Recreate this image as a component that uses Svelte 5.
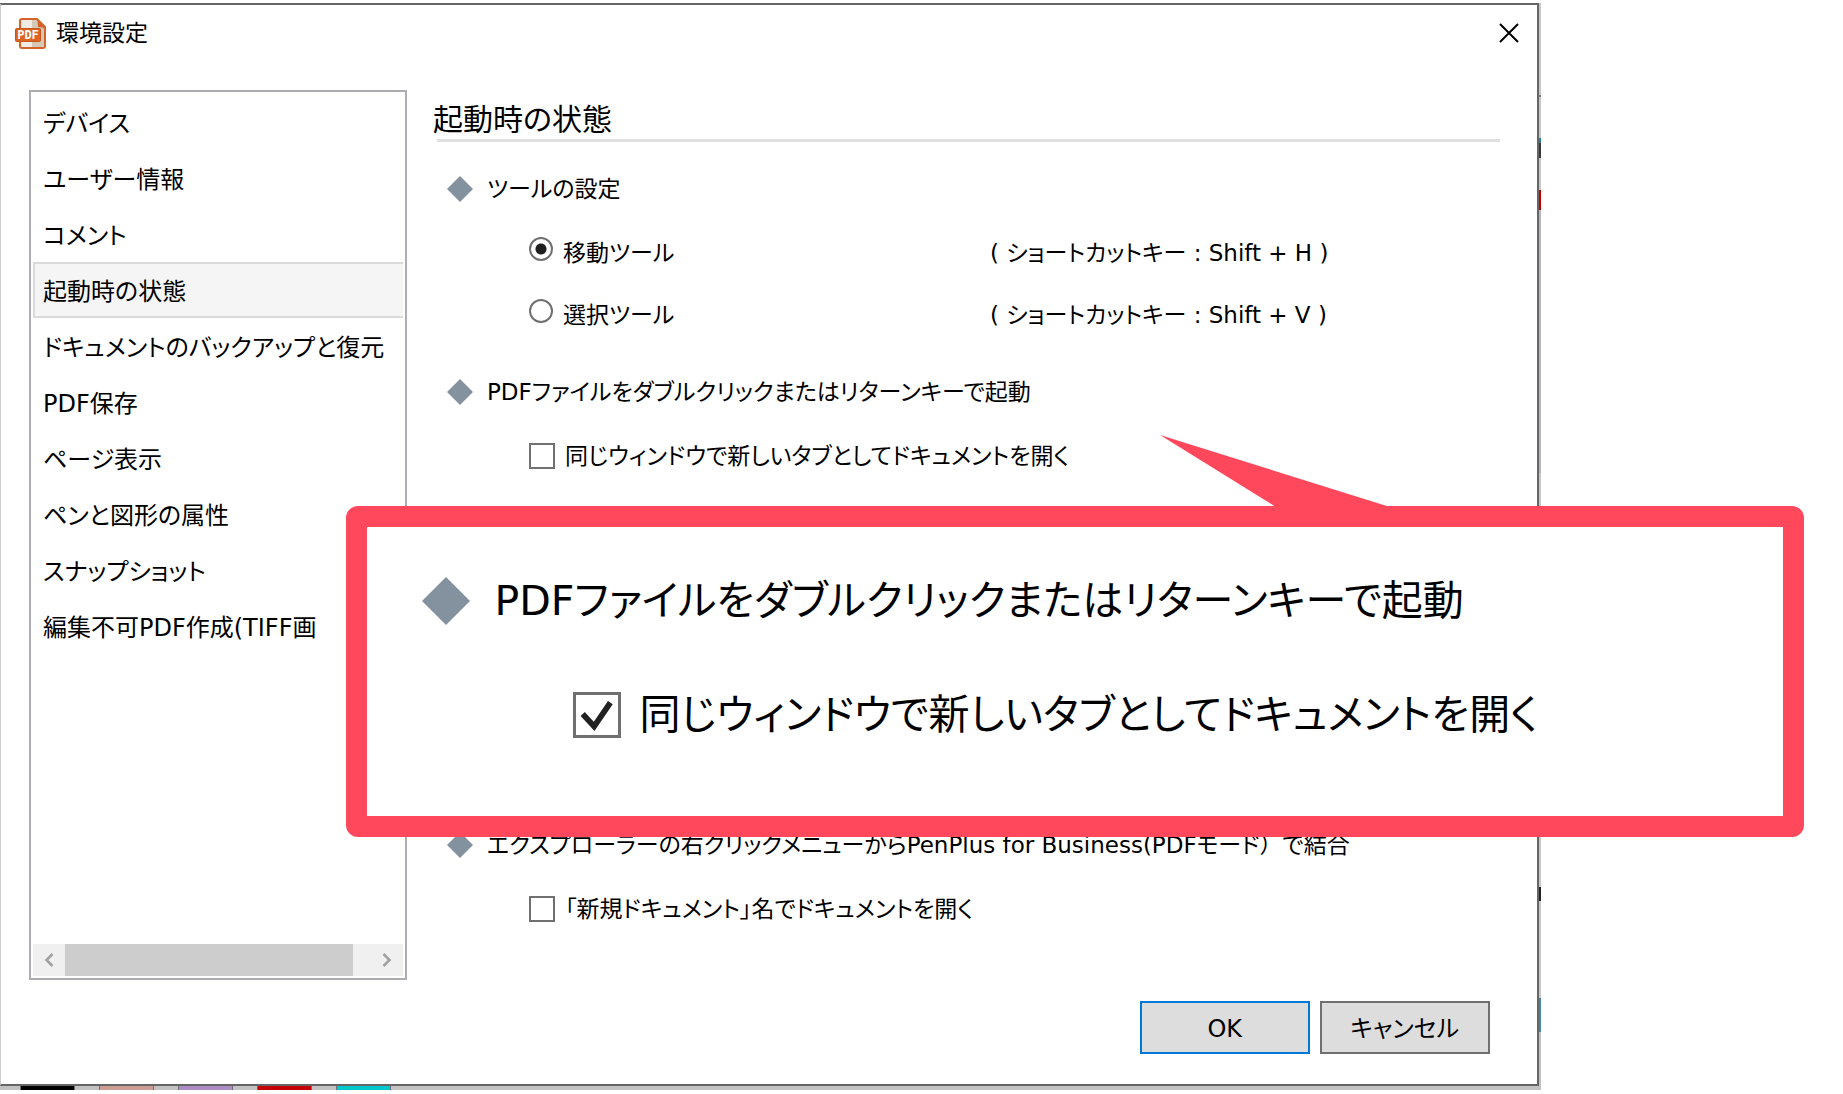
<script lang="ts">
  const categories = [
    'デバイス',
    'ユーザー情報',
    'コメント',
    '起動時の状態',
    'ドキュメントのバックアップと復元',
    'PDF保存',
    'ページ表示',
    'ペンと図形の属性',
    'スナップショット',
    '編集不可PDF作成(TIFF画',
  ];

  const tools = [
    { id: 'move', label: '移動ツール', shortcut: '( ショートカットキー : Shift + H )' },
    { id: 'select', label: '選択ツール', shortcut: '( ショートカットキー : Shift + V )' },
  ];

  const swatches = ['black', 'salmon', 'violet', 'red', 'cyan'];

  let selected = $state(3);
  let tool = $state('move');
  let openInTab = $state(false);
  let useNewName = $state(false);
  let calloutChecked = $state(true);
</script>

{#snippet diamond()}
  <svg class="diamond" viewBox="0 0 24 24" aria-hidden="true">
    <path d="M12 0 24 12 12 24 0 12Z" fill="#8492a0" />
  </svg>
{/snippet}

<main class="page">
  <div class="backdrop">
    <div class="dialog" role="dialog" aria-labelledby="dialog-title">
      <header class="titlebar">
        <svg class="app-icon" viewBox="0 0 31 31" aria-hidden="true">
          <path d="M5 3q0-2 2-2h15l8 8v19q0 2-2 2H7q-2 0-2-2Z" fill="#f0ebe4" stroke="#d4622a" stroke-width="2" />
          <path d="M17 2h5l7 7v18q0 2-2 2H17Z" fill="#d5c8b6" />
          <path d="M21 1q2 1 2 8 5 0 7 2V9l-8-8Z" fill="#d4622a" />
          <rect x="0.5" y="10.500" width="25" height="13" rx="1" fill="#dc6423" stroke="#c9551c" />
          <text x="13" y="21" text-anchor="middle" font-family="DejaVu Sans Mono, monospace" font-size="12" font-weight="700" fill="#fff">PDF</text>
        </svg>
        <span id="dialog-title" class="title">環境設定</span>
        <button type="button" class="close" aria-label="閉じる">
          <svg viewBox="0 0 20 20" width="20" height="20" aria-hidden="true">
            <path d="M1 1 19 19M19 1 1 19" stroke="#000" stroke-width="2" fill="none" />
          </svg>
        </button>
      </header>

      <div class="body">
        <nav class="sidebar">
          <ul>
            {#each categories as name, i (name)}
              <li>
                <button
                  type="button"
                  class="category"
                  class:selected={i === selected}
                  onclick={() => (selected = i)}
                >
                  {name}
                </button>
              </li>
            {/each}
          </ul>
          <div class="scrollbar">
            <button type="button" aria-label="左へスクロール">
              <svg viewBox="0 0 10 14" width="10" height="14"><path d="M8.500 1 2.500 7l6 6" /></svg>
            </button>
            <div class="track"><div class="thumb"></div></div>
            <button type="button" aria-label="右へスクロール">
              <svg viewBox="0 0 10 14" width="10" height="14"><path d="M1.500 1 7.500 7l-6 6" /></svg>
            </button>
          </div>
        </nav>

        <section class="panel">
          <h1>起動時の状態</h1>
          <hr />

          <div class="group">
            <h2>{@render diamond()}ツールの設定</h2>
            <div class="options">
              {#each tools as t (t.id)}
                <div class="tool-row">
                  <label>
                    <input type="radio" name="tool" value={t.id} bind:group={tool} />
                    {t.label}
                  </label>
                  <span>{t.shortcut}</span>
                </div>
              {/each}
            </div>
          </div>

          <div class="group">
            <h2>{@render diamond()}PDFファイルをダブルクリックまたはリターンキーで起動</h2>
            <div class="options">
              <label>
                <input type="checkbox" bind:checked={openInTab} />
                同じウィンドウで新しいタブとしてドキュメントを開く
              </label>
            </div>
          </div>

          <div class="group last">
            <h2>
              {@render diamond()}
              <span>エクスプローラーの右クリックメニューからPenPlus for Business(PDFモード<span class="full">）</span>で結合</span>
            </h2>
            <div class="options">
              <label>
                <input type="checkbox" bind:checked={useNewName} />
                「新規ドキュメント」名でドキュメントを開く
              </label>
            </div>
          </div>
        </section>
      </div>

      <footer>
        <button type="button" class="push default">OK</button>
        <button type="button" class="push">キャンセル</button>
      </footer>
    </div>

    <div class="swatches">
      {#each swatches as s (s)}
        <span class="swatch {s}"></span>
      {/each}
    </div>
  </div>

  <aside class="callout">
    <svg class="tail" viewBox="0 0 230 72" aria-hidden="true">
      <path d="M0 0 230 72H116Z" fill="#ff485c" />
    </svg>
    <p>{@render diamond()}PDFファイルをダブルクリックまたはリターンキーで起動</p>
    <label>
      <input type="checkbox" bind:checked={calloutChecked} />
      同じウィンドウで新しいタブとしてドキュメントを開く
    </label>
  </aside>
</main>

<style>
  :global(body) {
    margin: 0;
    background: #fff;
  }

  .page {
    position: relative;
    padding-top: 3px;
    font-family: 'DejaVu Sans', 'Noto Sans CJK JP', sans-serif;
    font-size: 23px;
    line-height: 32px;
    font-feature-settings: 'palt';
    color: #000;
    white-space: nowrap;
  }

  button {
    font: inherit;
    font-feature-settings: inherit;
    color: inherit;
    cursor: pointer;
  }

  /* Sliver of the application window showing round the dialog */
  .backdrop {
    box-sizing: border-box;
    width: 83.6%;
    padding-right: 2px;
    background: linear-gradient(
      #c8c8c8 92px, #6f7f92 92px 94px,
      #c8c8c8 94px 135px, #2e7ba3 135px 140px,
      #3a3a3a 140px 155px, #c8c8c8 155px 187px,
      #c80000 187px 207px, #b4b8bd 207px 470px,
      #c8c8c8 470px 884px, #222 884px 898px,
      #c8c8c8 898px 995px, #4287a3 995px 1029px,
      #c2c2c2 1029px
    );
  }

  .dialog {
    background: #fff;
    border: 2px solid #666;
    border-left: 1px solid #ccc;
  }

  .titlebar {
    display: flex;
    align-items: center;
    height: 56px;
    padding: 0 18px 0 14px;
  }
  .app-icon {
    width: 31px;
    height: 31px;
  }
  .title {
    flex: 1;
    margin-left: 10px;
  }
  .close {
    display: flex;
    padding: 0;
    background: none;
    border: 0;
  }

  .body {
    display: flex;
    gap: 26px;
    padding: 29px 37px 0 28px;
  }

  .sidebar {
    box-sizing: border-box;
    flex: 0 0 378px;
    display: flex;
    flex-direction: column;
    padding: 2px;
    border: 2px solid #abadb3;
    font-size: 24px;
  }
  .sidebar ul {
    flex: 1;
    min-height: 850px;
    margin: 0;
    padding: 0;
    list-style: none;
  }
  .category {
    display: flex;
    align-items: center;
    box-sizing: border-box;
    width: 100%;
    height: 56px;
    padding: 4px 0 0 8px;
    background: none;
    border: 2px solid transparent;
    border-right: 0;
    text-align: left;
  }
  .category.selected {
    background: #f5f5f5;
    border-color: #dadada;
  }

  .scrollbar {
    display: flex;
    height: 32px;
    background: #f0f0f0;
  }
  .scrollbar button {
    display: flex;
    align-items: center;
    justify-content: center;
    width: 32px;
    padding: 0;
    background: none;
    border: 0;
  }
  .scrollbar path {
    fill: none;
    stroke: #a0a0a0;
    stroke-width: 2.5;
  }
  .track {
    flex: 1;
  }
  .thumb {
    width: 94%;
    height: 100%;
    background: #cdcdcd;
  }

  .panel {
    flex: 1;
    min-width: 0;
  }
  h1 {
    margin: 0;
    padding-top: 10px;
    font-size: 30px;
    line-height: 39px;
    font-weight: 400;
  }
  hr {
    margin: 0 0 0 4px;
    border: 0;
    border-top: 3px solid #e0e0e0;
  }

  .group {
    margin-top: 45px;
  }
  hr + .group {
    margin-top: 31px;
  }
  .group.last {
    margin-top: 357px;
  }
  h2 {
    display: flex;
    align-items: center;
    gap: 14px;
    margin: 0;
    padding-left: 14px;
    font-size: inherit;
    font-weight: 400;
  }
  .diamond {
    flex: none;
    width: 26px;
    height: 26px;
  }
  .full {
    font-feature-settings: normal;
  }

  .options {
    display: flex;
    flex-direction: column;
    gap: 30px;
    margin-top: 32px;
    padding-left: 96px;
  }
  .options label {
    display: flex;
    align-items: center;
    gap: 10px;
  }
  .tool-row {
    display: grid;
    grid-template-columns: 461px 1fr;
  }
  .tool-row label {
    align-items: flex-start;
  }

  input {
    flex: none;
    box-sizing: border-box;
    width: 26px;
    height: 26px;
    margin: 0;
    appearance: none;
    background: #fff center / 100% no-repeat;
    border: 2px solid #707070;
  }
  input[type='radio'] {
    width: 24px;
    height: 24px;
    border-radius: 50%;
  }
  input[type='radio']:checked {
    background-image: radial-gradient(circle, #1f1f1f 5px, transparent 6px);
  }
  input[type='checkbox']:checked {
    background-image: url("data:image/svg+xml,%3Csvg xmlns='http://www.w3.org/2000/svg' viewBox='0 0 44 44'%3E%3Cpath d='M7 21 19 34 36 9' fill='none' stroke='%23222' stroke-width='6'/%3E%3C/svg%3E");
  }

  footer {
    display: flex;
    justify-content: flex-end;
    gap: 10px;
    padding: 21px 47px 30px;
  }
  .push {
    width: 170px;
    height: 53px;
    padding: 2px 0 0;
    background: #ddd;
    border: 2px solid #707070;
    font-size: 24px;
  }
  .push.default {
    border-color: #0078d7;
  }

  .swatches {
    display: flex;
    gap: 24px;
    height: 4px;
    padding-left: 20px;
    background: #c2c2c2;
  }
  .swatch {
    box-sizing: border-box;
    width: 55px;
    border: solid #6b6f78;
    border-width: 0 1px;
  }
  .black { background: #000; }
  .salmon { background: #cc9d94; }
  .violet { background: #ad8cc4; }
  .red { background: #c40000; }
  .cyan { background: #00c8cc; }

  .callout {
    position: absolute;
    top: 506px;
    left: 18.8%;
    right: 2.1%;
    display: flex;
    flex-direction: column;
    gap: 66px;
    padding: 50px 0 77px 55px;
    background: #fff;
    border: 21px solid #ff485c;
    border-radius: 12px;
    font-size: 41px;
    line-height: 48px;
  }
  .callout p,
  .callout label {
    display: flex;
    align-items: center;
    gap: 24px;
    margin: 0;
  }
  .callout label {
    gap: 18px;
    padding-left: 151px;
  }
  .callout .diamond {
    width: 48px;
    height: 48px;
  }
  .callout input {
    width: 48px;
    height: 46px;
    border-width: 3px;
  }
  .tail {
    position: absolute;
    top: -92px;
    left: 56%;
    width: 230px;
    height: 72px;
  }
</style>
